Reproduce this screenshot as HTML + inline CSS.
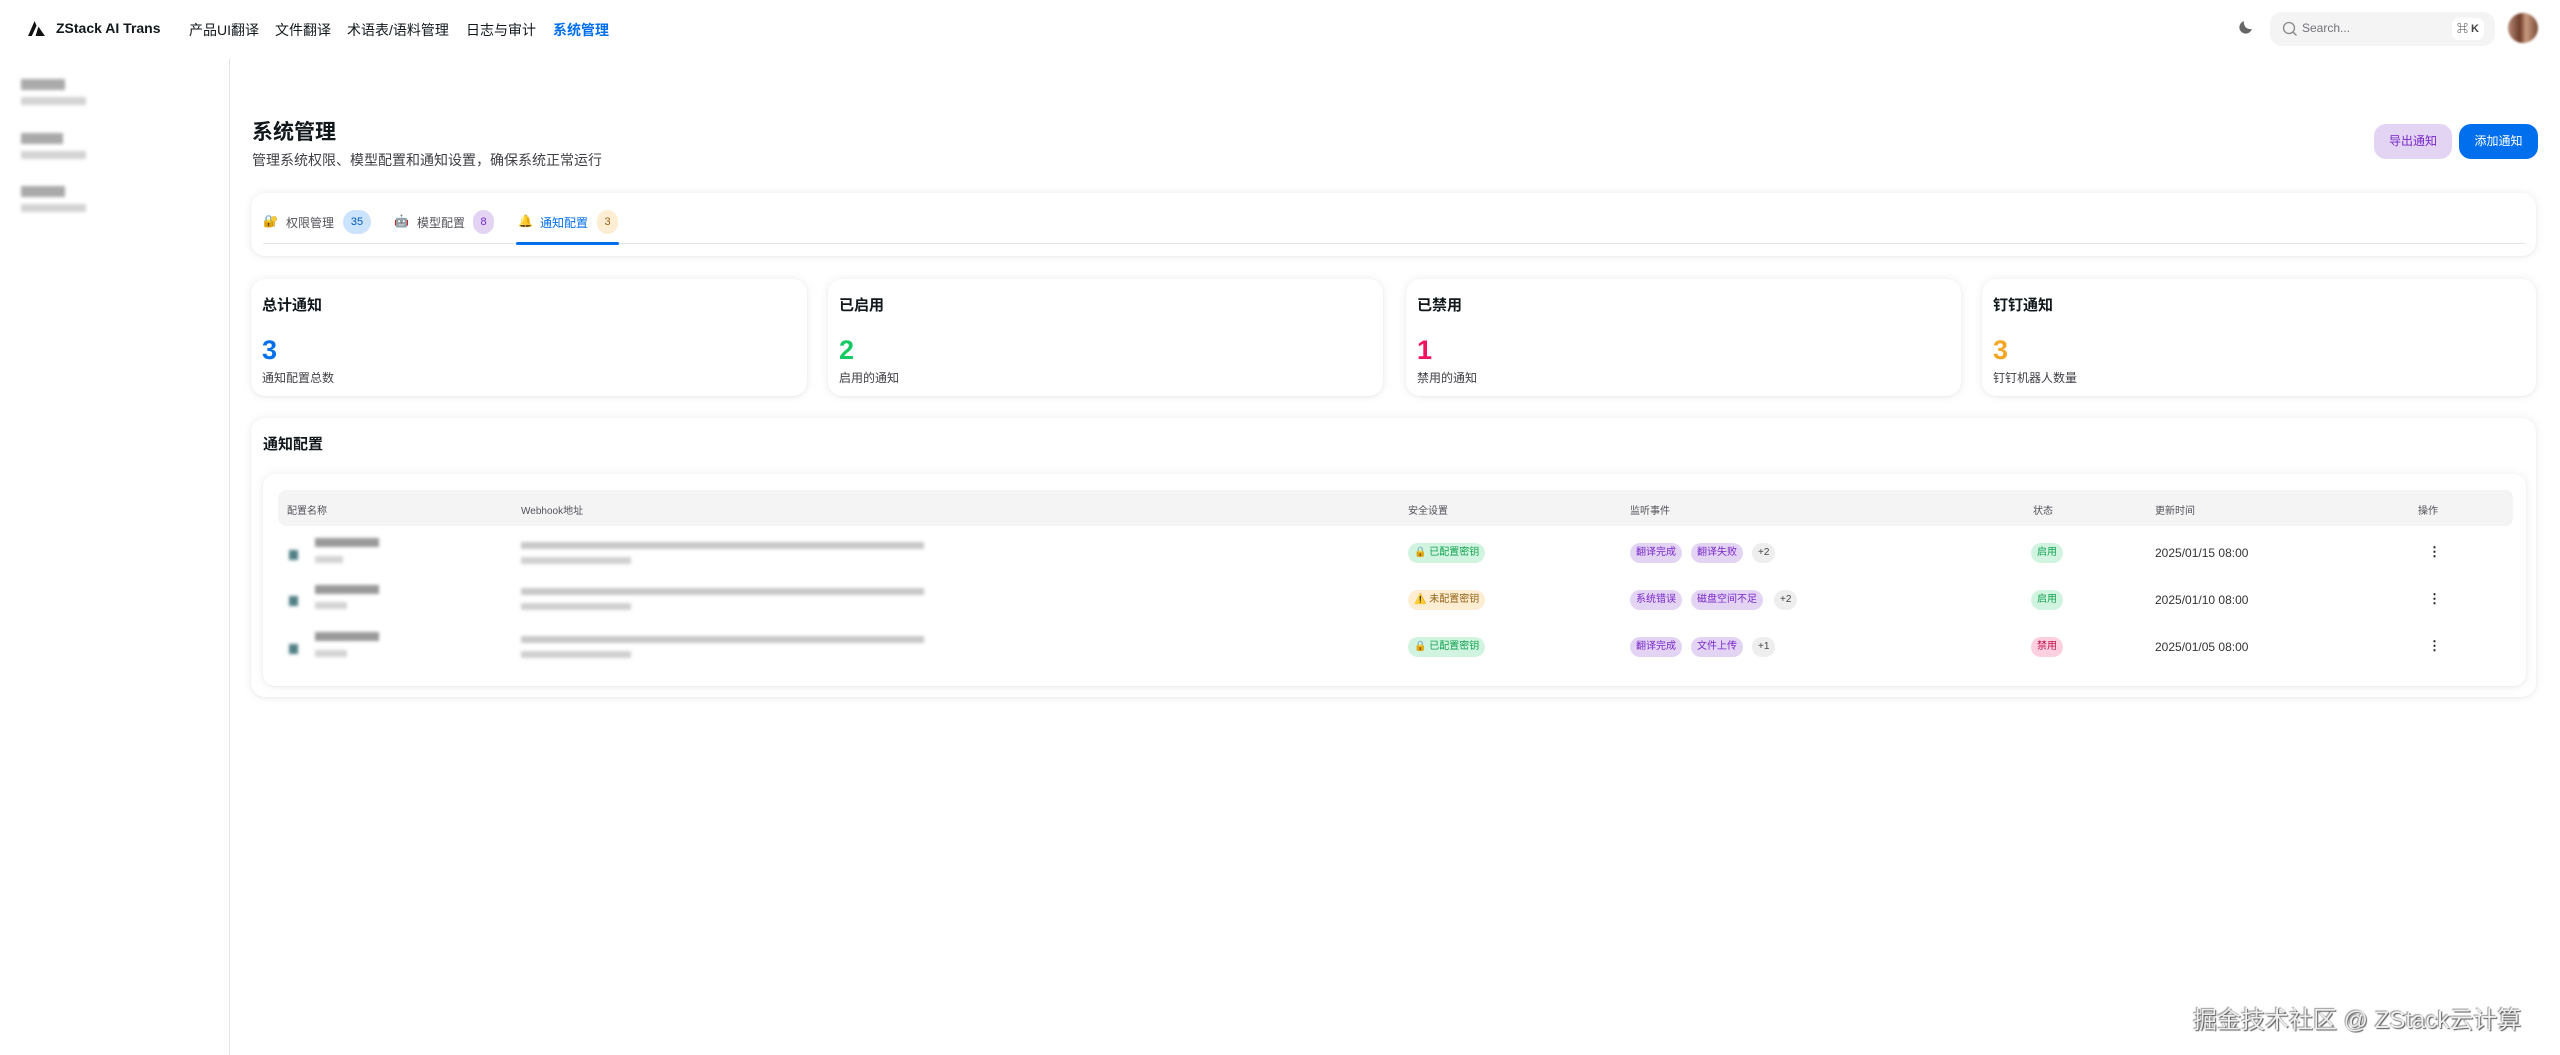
<!DOCTYPE html>
<html><head><meta charset="utf-8"><style>
*{box-sizing:border-box;margin:0;padding:0}
body{width:2560px;height:1055px;overflow:hidden;background:#fff;font-family:"Liberation Sans","Noto Sans CJK SC",sans-serif;color:#11181c;position:relative}
.abs{position:absolute}
.nav{font-size:14px;top:20px;white-space:nowrap}
.blur{background:#bbb;filter:blur(1.5px);position:absolute}
.card{position:absolute;background:#fff;border-radius:14px;box-shadow:0 0 10px rgba(0,0,0,.07),0 1px 3px rgba(0,0,0,.05)}
.stat h3{position:absolute;left:11px;top:15px;font-size:15px;font-weight:bold}
.stat .n{position:absolute;left:11px;top:56px;font-size:27px;font-weight:bold}
.stat .l{position:absolute;left:11px;top:90px;font-size:12px;color:#3f3f46}
.th{position:absolute;top:502px;font-size:10px;color:#52525b}
.chip{position:absolute;height:20px;line-height:20px;border-radius:10px;font-size:10px;padding:0 6px;white-space:nowrap}
.pur{background:#e4d4f4;color:#7828c8}
.gry{background:#eee;color:#444}
.tab{position:absolute;top:214px;font-size:12px;color:#52525b;white-space:nowrap}
.badge{position:absolute;top:210px;height:24px;line-height:24px;border-radius:12px;text-align:center;font-size:11px}
</style></head><body>
<svg class="abs" style="left:28px;top:21px" width="17" height="15" viewBox="0 0 18 16"><path d="M7 0L0 16h4L9 5z" fill="#111"/><path d="M11 6l7 10H8z" fill="#111"/></svg>
<div class="abs nav" style="left:56px;font-weight:bold">ZStack AI Trans</div>
<div class="abs nav" style="left:189px">产品UI翻译</div>
<div class="abs nav" style="left:275px">文件翻译</div>
<div class="abs nav" style="left:347px">术语表/语料管理</div>
<div class="abs nav" style="left:466px">日志与审计</div>
<div class="abs nav" style="left:553px;color:#006fee;font-weight:bold">系统管理</div>
<svg class="abs" style="left:2237px;top:19px" width="17" height="17" viewBox="0 0 24 24"><path d="M21 14A9 9 0 0 1 10 3a9 9 0 1 0 11 11z" fill="#666"/></svg>
<div class="abs" style="left:2270px;top:12px;width:225px;height:34px;background:#f4f4f5;border-radius:12px"></div>
<svg class="abs" style="left:2282px;top:21px" width="16" height="16" viewBox="0 0 16 16"><circle cx="7" cy="7" r="5.5" fill="none" stroke="#888" stroke-width="1.3"/><path d="M11 11l3.5 3.5" stroke="#888" stroke-width="1.3"/></svg>
<div class="abs" style="left:2302px;top:21px;font-size:12px;color:#71717a">Search...</div>
<div class="abs" style="left:2452px;top:18px;width:32px;height:22px;background:#fff;border-radius:7px;font-size:11px;line-height:22px;text-align:center;color:#444;font-weight:bold">⌘ K</div>
<div class="abs" style="left:2508px;top:13px;width:30px;height:30px;border-radius:50%;background:linear-gradient(90deg,#b98d78,#6e3b2a 40%,#c89a7e 60%,#7a4a35);filter:blur(1px)"></div>
<div class="abs" style="left:229px;top:59px;width:1px;height:996px;background:#e4e4e7"></div>
<div class="blur" style="left:21px;top:79px;width:44px;height:11px;background:#aaa"></div>
<div class="blur" style="left:21px;top:97px;width:65px;height:8px;background:#d4d4d4"></div>
<div class="blur" style="left:21px;top:133px;width:42px;height:11px;background:#aaa"></div>
<div class="blur" style="left:21px;top:151px;width:65px;height:8px;background:#d4d4d4"></div>
<div class="blur" style="left:21px;top:186px;width:44px;height:11px;background:#aaa"></div>
<div class="blur" style="left:21px;top:204px;width:65px;height:8px;background:#d4d4d4"></div>
<div class="abs" style="left:252px;top:116px;font-size:21px;font-weight:bold">系统管理</div>
<div class="abs" style="left:252px;top:150px;font-size:14px;color:#3f3f46">管理系统权限、模型配置和通知设置，确保系统正常运行</div>
<div class="abs" style="left:2374px;top:124px;width:78px;height:35px;border-radius:12px;background:#e4d4f4;color:#7828c8;font-size:12px;line-height:35px;text-align:center">导出通知</div>
<div class="abs" style="left:2459px;top:124px;width:79px;height:35px;border-radius:12px;background:#006fee;color:#fff;font-size:12px;line-height:35px;text-align:center">添加通知</div>
<div class="card" style="left:251px;top:193px;width:2285px;height:63px"></div>
<div class="abs" style="left:263px;top:243px;width:2262px;height:1px;background:#e4e4e7"></div>
<div class="tab" style="left:263px">🔐</div>
<div class="tab" style="left:286px">权限管理</div>
<div class="badge" style="left:343px;width:28px;background:#cce3fd;color:#005bc4">35</div>
<div class="tab" style="left:394px">🤖</div>
<div class="tab" style="left:417px">模型配置</div>
<div class="badge" style="left:473px;width:21px;background:#e4d4f4;color:#7828c8">8</div>
<div class="tab" style="left:518px">🔔</div>
<div class="tab" style="left:540px;color:#006fee">通知配置</div>
<div class="badge" style="left:597px;width:21px;background:#fdedd3;color:#936316">3</div>
<div class="abs" style="left:516px;top:242px;width:103px;height:3px;background:#006fee;border-radius:2px"></div>
<div class="card stat" style="left:251px;top:279px;width:556px;height:117px"><h3>总计通知</h3><div class="n" style="color:#006fee">3</div><div class="l">通知配置总数</div></div>
<div class="card stat" style="left:828px;top:279px;width:555px;height:117px"><h3>已启用</h3><div class="n" style="color:#17c964">2</div><div class="l">启用的通知</div></div>
<div class="card stat" style="left:1406px;top:279px;width:555px;height:117px"><h3>已禁用</h3><div class="n" style="color:#f31260">1</div><div class="l">禁用的通知</div></div>
<div class="card stat" style="left:1982px;top:279px;width:554px;height:117px"><h3>钉钉通知</h3><div class="n" style="color:#f5a524">3</div><div class="l">钉钉机器人数量</div></div>
<div class="card" style="left:251px;top:418px;width:2285px;height:279px"></div>
<div class="abs" style="left:263px;top:433px;font-size:15px;font-weight:bold">通知配置</div>
<div class="card" style="left:263px;top:474px;width:2263px;height:212px;border-radius:12px"></div>
<div class="abs" style="left:278px;top:490px;width:2235px;height:36px;background:#f4f4f5;border-radius:8px"></div>
<div class="th" style="left:287px">配置名称</div>
<div class="th" style="left:521px">Webhook地址</div>
<div class="th" style="left:1408px">安全设置</div>
<div class="th" style="left:1630px">监听事件</div>
<div class="th" style="left:2033px">状态</div>
<div class="th" style="left:2155px">更新时间</div>
<div class="th" style="left:2418px">操作</div>
<!-- row 1 -->
<div class="blur" style="left:289px;top:550px;width:9px;height:10px;background:#4f7f85"></div>
<div class="blur" style="left:315px;top:538px;width:64px;height:9px;background:#999"></div>
<div class="blur" style="left:315px;top:556px;width:28px;height:7px;background:#d4d4d4"></div>
<div class="blur" style="left:521px;top:542px;width:403px;height:7px;background:#c8c8c8"></div>
<div class="blur" style="left:521px;top:557px;width:110px;height:7px;background:#d0d0d0"></div>
<div class="chip" style="left:1408px;top:543px;background:#d1f4e0;color:#12a150">🔒 已配置密钥</div>
<div class="chip pur" style="left:1630px;top:543px">翻译完成</div>
<div class="chip pur" style="left:1691px;top:543px">翻译失败</div>
<div class="chip gry" style="left:1752px;top:543px">+2</div>
<div class="chip" style="left:2031px;top:543px;background:#d1f4e0;color:#12a150">启用</div>
<div class="abs" style="left:2155px;top:546px;font-size:12px;color:#333">2025/01/15 08:00</div>
<div class="abs" style="left:2428px;top:544px;font-size:13px;font-weight:bold">⋮</div>
<!-- row 2 -->
<div class="blur" style="left:289px;top:596px;width:9px;height:10px;background:#4f7f85"></div>
<div class="blur" style="left:315px;top:585px;width:64px;height:9px;background:#999"></div>
<div class="blur" style="left:315px;top:602px;width:32px;height:7px;background:#d4d4d4"></div>
<div class="blur" style="left:521px;top:588px;width:403px;height:7px;background:#c8c8c8"></div>
<div class="blur" style="left:521px;top:603px;width:110px;height:7px;background:#d0d0d0"></div>
<div class="chip" style="left:1408px;top:590px;background:#fdedd3;color:#936316">⚠️ 未配置密钥</div>
<div class="chip pur" style="left:1630px;top:590px">系统错误</div>
<div class="chip pur" style="left:1691px;top:590px">磁盘空间不足</div>
<div class="chip gry" style="left:1774px;top:590px">+2</div>
<div class="chip" style="left:2031px;top:590px;background:#d1f4e0;color:#12a150">启用</div>
<div class="abs" style="left:2155px;top:593px;font-size:12px;color:#333">2025/01/10 08:00</div>
<div class="abs" style="left:2428px;top:591px;font-size:13px;font-weight:bold">⋮</div>
<!-- row 3 -->
<div class="blur" style="left:289px;top:644px;width:9px;height:10px;background:#4f7f85"></div>
<div class="blur" style="left:315px;top:632px;width:64px;height:9px;background:#999"></div>
<div class="blur" style="left:315px;top:650px;width:32px;height:7px;background:#d4d4d4"></div>
<div class="blur" style="left:521px;top:636px;width:403px;height:7px;background:#c8c8c8"></div>
<div class="blur" style="left:521px;top:651px;width:110px;height:7px;background:#d0d0d0"></div>
<div class="chip" style="left:1408px;top:637px;background:#d1f4e0;color:#12a150">🔒 已配置密钥</div>
<div class="chip pur" style="left:1630px;top:637px">翻译完成</div>
<div class="chip pur" style="left:1691px;top:637px">文件上传</div>
<div class="chip gry" style="left:1752px;top:637px">+1</div>
<div class="chip" style="left:2031px;top:637px;background:#fdd0df;color:#c20e4d">禁用</div>
<div class="abs" style="left:2155px;top:640px;font-size:12px;color:#333">2025/01/05 08:00</div>
<div class="abs" style="left:2428px;top:638px;font-size:13px;font-weight:bold">⋮</div>
<div class="abs" style="left:2193px;top:1000px;font-size:24px;color:#eee;text-shadow:1px 1px 1px #555,-1px -1px 1px #999;white-space:nowrap">掘金技术社区 @ ZStack云计算</div>
</body></html>
